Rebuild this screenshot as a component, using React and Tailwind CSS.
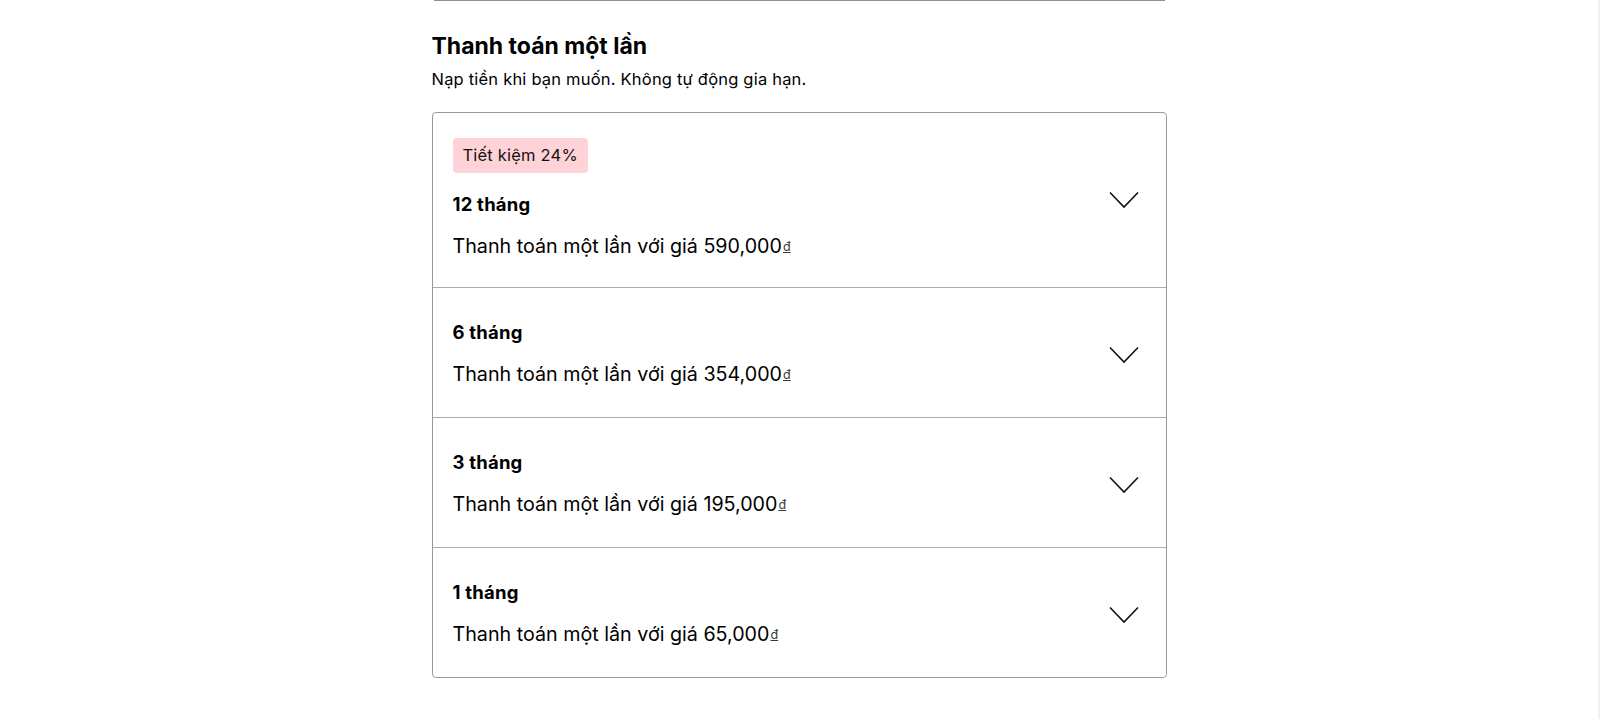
import React from 'react';

const plans = [
    { months: '12 tháng', price: '590,000', badge: 'Tiết kiệm 24%' },
    { months: '6 tháng', price: '354,000' },
    { months: '3 tháng', price: '195,000' },
    { months: '1 tháng', price: '65,000' },
];

const Chevron = () => (
    <svg width="30" height="18" viewBox="0 0 30 18" fill="none" className="shrink-0 mt-[2px]">
        <path d="M1 1.5 L15 16 L29 1.5" stroke="#121212" strokeWidth="1.6" />
    </svg>
);

const PlanRow = ({ plan, first }) => (
    <div
        className={
            'flex items-center justify-between pl-[20px] pr-[27px] ' +
            (first ? 'pt-[25px] pb-[27px]' : 'pt-[31px] pb-[29px] border-t border-[#ababab]')
        }
    >
        <div className="flex flex-col items-start">
            {plan.badge && (
                <span className="mb-[18px] h-[35px] px-[10px] flex items-center rounded-[4px] bg-[#ffd2d7] text-[16.5px] tracking-[0.2px] text-[#121212]">
                    {plan.badge}
                </span>
            )}
            <div className="h-[28px] flex items-center text-[18.5px] tracking-[0.2px] font-bold text-black">{plan.months}</div>
            <div className="mt-[13px] h-[28px] flex items-baseline text-[19.7px] leading-[28px] text-black whitespace-pre">
                <span>Thanh toán một lần với giá {plan.price}</span>
                <span className="ml-[1px] relative -top-[2px] text-[12.5px] leading-none underline underline-offset-[1px] text-[#3a3a3a]">đ</span>
            </div>
        </div>
        <Chevron />
    </div>
);

const App = () => {
    return (
        <div
            className="min-h-screen bg-white border-r-2 border-[#f0f0f0]"
            style={{ fontFamily: 'Inter, "Noto Sans", sans-serif' }}
        >
            <div className="w-[735px] mx-auto pb-10">
                <div className="h-px mx-[2px] bg-[#8f8f8f]" />
                <h2 className="mt-[31px] text-[23px] leading-[28px] font-bold text-black">Thanh toán một lần</h2>
                <p className="mt-[7px] text-[16.5px] leading-[24px] tracking-[0.2px] text-black">
                    Nạp tiền khi bạn muốn. Không tự động gia hạn.
                </p>
                <div className="mt-[21px] border border-[#999] rounded-[4px]">
                    {plans.map((p, i) => (
                        <PlanRow key={p.months} plan={p} first={i === 0} />
                    ))}
                </div>
            </div>
        </div>
    );
};

export default App;
